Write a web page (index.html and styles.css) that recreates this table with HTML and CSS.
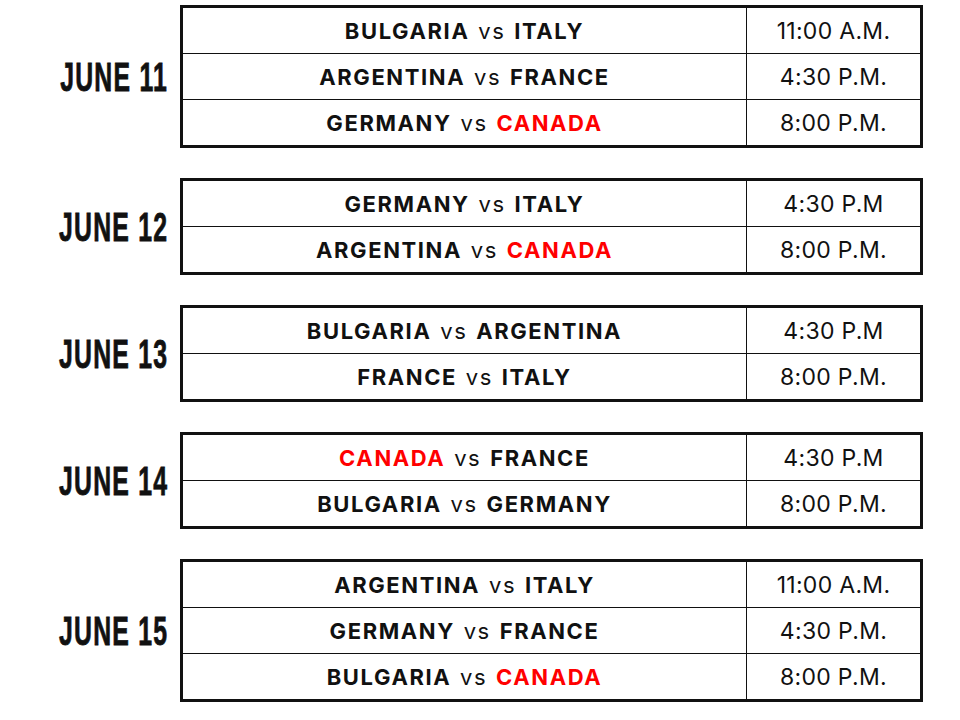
FILE: index.html
```html
<!DOCTYPE html>
<html lang="en">
<head>
<meta charset="utf-8">
<title>Schedule</title>
<link rel="stylesheet" href="styles.css">
</head>
<body>
<main class="schedule">
  <section class="day">
    <div class="date"><span class="date-text">JUNE 11</span></div>
    <div class="games">
      <div class="game"><div class="teams"><b>BULGARIA</b> vs <b>ITALY</b></div><div class="time">11:00 A.M.</div></div>
      <div class="game"><div class="teams"><b>ARGENTINA</b> vs <b>FRANCE</b></div><div class="time">4:30 P.M.</div></div>
      <div class="game"><div class="teams"><b>GERMANY</b> vs <b class="red">CANADA</b></div><div class="time">8:00 P.M.</div></div>
    </div>
  </section>
  <section class="day">
    <div class="date"><span class="date-text">JUNE 12</span></div>
    <div class="games">
      <div class="game"><div class="teams"><b>GERMANY</b> vs <b>ITALY</b></div><div class="time">4:30 P.M</div></div>
      <div class="game"><div class="teams"><b>ARGENTINA</b> vs <b class="red">CANADA</b></div><div class="time">8:00 P.M.</div></div>
    </div>
  </section>
  <section class="day">
    <div class="date"><span class="date-text">JUNE 13</span></div>
    <div class="games">
      <div class="game"><div class="teams"><b>BULGARIA</b> vs <b>ARGENTINA</b></div><div class="time">4:30 P.M</div></div>
      <div class="game"><div class="teams"><b>FRANCE</b> vs <b>ITALY</b></div><div class="time">8:00 P.M.</div></div>
    </div>
  </section>
  <section class="day">
    <div class="date"><span class="date-text">JUNE 14</span></div>
    <div class="games">
      <div class="game"><div class="teams"><b class="red">CANADA</b> vs <b>FRANCE</b></div><div class="time">4:30 P.M</div></div>
      <div class="game"><div class="teams"><b>BULGARIA</b> vs <b>GERMANY</b></div><div class="time">8:00 P.M.</div></div>
    </div>
  </section>
  <section class="day">
    <div class="date"><span class="date-text">JUNE 15</span></div>
    <div class="games">
      <div class="game"><div class="teams"><b>ARGENTINA</b> vs <b>ITALY</b></div><div class="time">11:00 A.M.</div></div>
      <div class="game"><div class="teams"><b>GERMANY</b> vs <b>FRANCE</b></div><div class="time">4:30 P.M.</div></div>
      <div class="game"><div class="teams"><b>BULGARIA</b> vs <b class="red">CANADA</b></div><div class="time">8:00 P.M.</div></div>
    </div>
  </section>
</main>
</body>
</html>
```
FILE: styles.css
```css
html, body {
  margin: 0;
  padding: 0;
  background: #fff;
}

body {
  font-family: Inter, "Liberation Sans", sans-serif;
  color: #111;
}

.schedule {
  display: flex;
  flex-direction: column;
  gap: 30px;
  padding-top: 5px;
}

.day {
  display: flex;
  align-items: center;
}

.date {
  width: 180px;
  flex: none;
  display: flex;
  justify-content: flex-end;
  padding-right: 12px;
  box-sizing: border-box;
}

.date-text {
  display: inline-block;
  font-family: "Liberation Sans", sans-serif;
  font-weight: 700;
  font-size: 40px;
  line-height: 40px;
  letter-spacing: 2px;
  transform: scaleX(0.62);
  transform-origin: right center;
  -webkit-text-stroke: 0.8px #111;
  white-space: nowrap;
  color: #111;
}

.games {
  width: 743px;
  box-sizing: border-box;
  border: 3px solid #111;
  display: flex;
  flex-direction: column;
}

.game {
  display: grid;
  grid-template-columns: 563px 1fr;
  height: 45px;
}

.game + .game {
  border-top: 1px solid #111;
}

.teams {
  display: flex;
  align-items: center;
  justify-content: center;
  font-size: 22px;
  letter-spacing: 1.6px;
  word-spacing: 1px;
  font-weight: 400;
  white-space: pre;
}

.teams b {
  font-weight: 700;
}

.red {
  color: #f00;
}

.time {
  border-left: 1px solid #111;
  display: flex;
  align-items: center;
  justify-content: center;
  font-size: 23px;
  letter-spacing: 0.3px;
  font-weight: 400;
}
```
